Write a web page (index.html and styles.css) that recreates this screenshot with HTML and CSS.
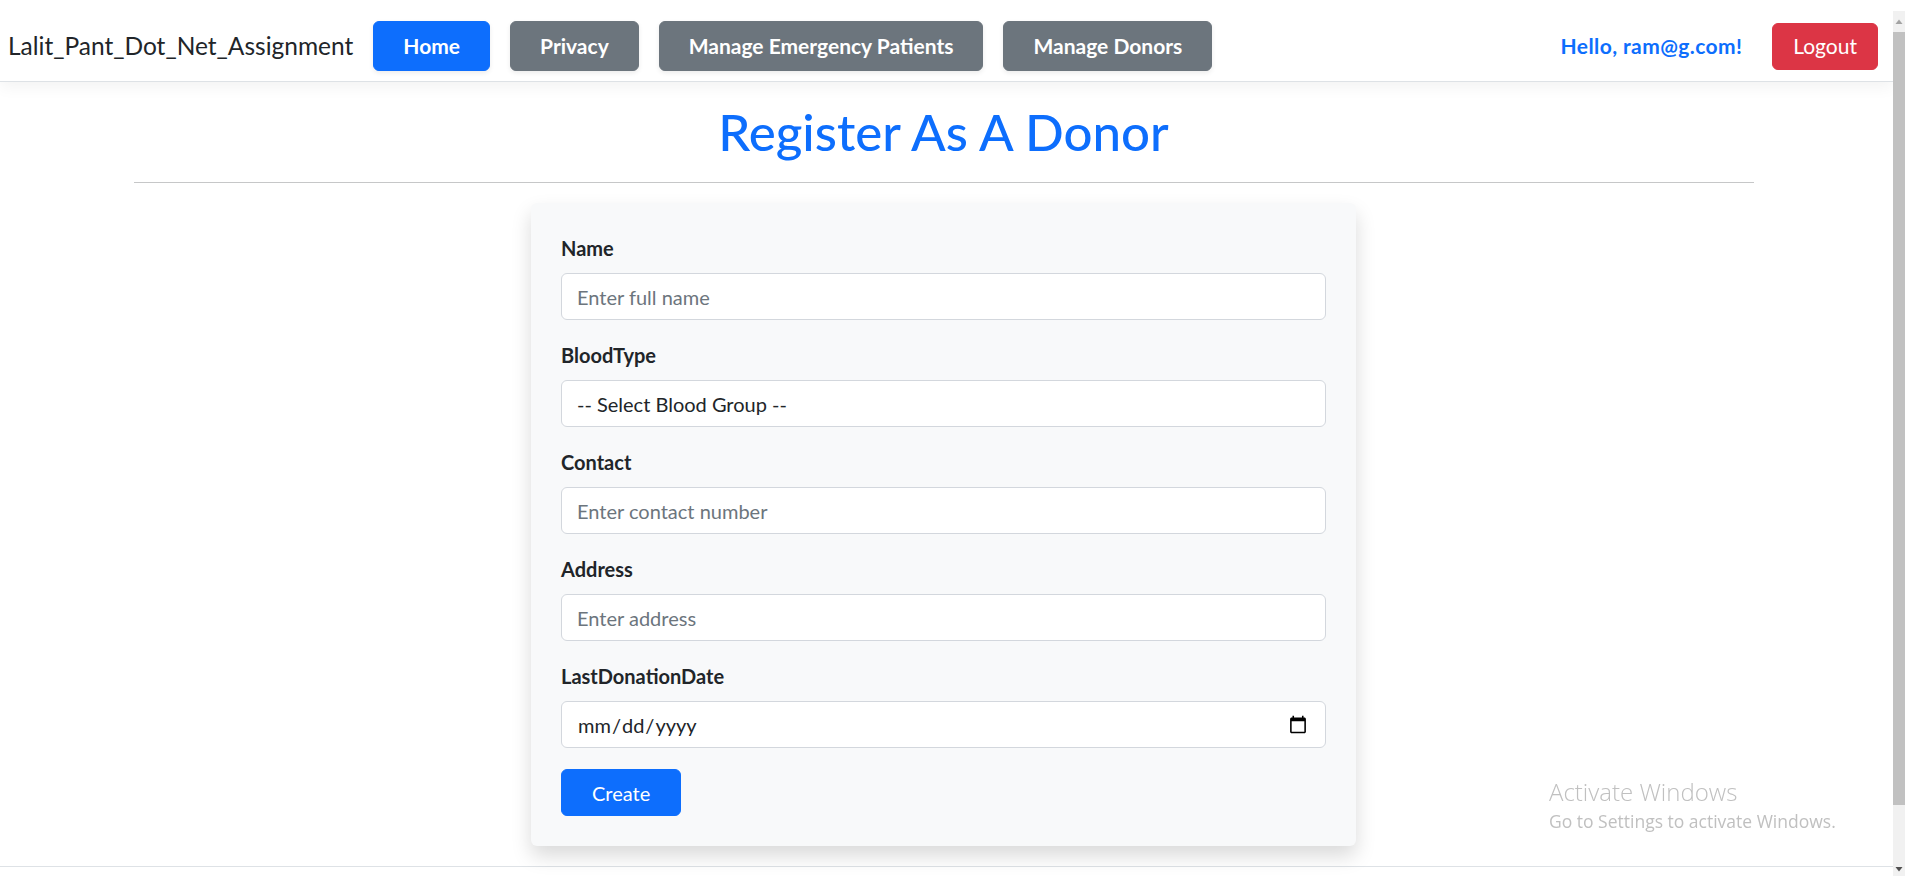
FILE: index.html
```html
<!DOCTYPE html>
<html lang="en">
<head>
<meta charset="utf-8">
<title>Register As A Donor - Lalit_Pant_Dot_Net_Assignment</title>
<link rel="stylesheet" href="styles.css">
</head>
<body>
<div class="page">
  <header>
    <nav class="navbar">
      <a class="brand" href="#">Lalit_Pant_Dot_Net_Assignment</a>
      <ul class="nav-links">
        <li><a class="btn-nav btn-primary" href="#">Home</a></li>
        <li><a class="btn-nav btn-secondary" href="#">Privacy</a></li>
        <li><a class="btn-nav btn-secondary" href="#">Manage Emergency Patients</a></li>
        <li><a class="btn-nav btn-secondary" href="#">Manage Donors</a></li>
      </ul>
      <div class="nav-user">
        <a class="hello" href="#">Hello, ram@g.com!</a>
        <button class="btn-logout" type="button">Logout</button>
      </div>
    </nav>
  </header>

  <main class="container">
    <h1 class="page-title">Register As A Donor</h1>
    <hr class="divider">
    <div class="row">
      <form class="card">
        <div class="field">
          <label class="field-label" for="name">Name</label>
          <input class="form-control" id="name" type="text" placeholder="Enter full name">
        </div>
        <div class="field">
          <label class="field-label" for="blood">BloodType</label>
          <select class="form-control form-select" id="blood">
            <option>-- Select Blood Group --</option>
            <option>A+</option>
            <option>A-</option>
            <option>B+</option>
            <option>B-</option>
            <option>AB+</option>
            <option>AB-</option>
            <option>O+</option>
            <option>O-</option>
          </select>
        </div>
        <div class="field">
          <label class="field-label" for="contact">Contact</label>
          <input class="form-control" id="contact" type="text" placeholder="Enter contact number">
        </div>
        <div class="field">
          <label class="field-label" for="address">Address</label>
          <input class="form-control" id="address" type="text" placeholder="Enter address">
        </div>
        <div class="field">
          <label class="field-label" for="ldd">LastDonationDate</label>
          <input class="form-control" id="ldd" type="date">
        </div>
        <button class="btn-create" type="submit">Create</button>
      </form>
    </div>
  </main>

  <footer class="footer"></footer>
</div>

<div class="scrollbar" aria-hidden="true">
  <div class="sb-gap"></div>
  <div class="sb-btn sb-up">
    <svg width="12" height="21" viewBox="0 0 12 21"><path d="M2.5 13 L6 8.5 L9.5 13 Z" fill="#a3a3a3"/></svg>
  </div>
  <div class="sb-thumb"></div>
  <div class="sb-rest"></div>
  <div class="sb-btn sb-down">
    <svg width="12" height="14" viewBox="0 0 12 14"><path d="M2.5 5 L6 9.5 L9.5 5 Z" fill="#505050"/></svg>
  </div>
</div>

<div class="watermark">
  <div class="wm-title">Activate Windows</div>
  <div class="wm-sub">Go to Settings to activate Windows.</div>
</div>
</body>
</html>
```

FILE: styles.css
```css
html {
  font-size: 20px;
}

body {
  margin: 0;
  display: flex;
  height: 100vh;
  overflow: hidden;
  font-family: "Lato", "Noto Sans", sans-serif;
  font-size: 20px;
  line-height: 1.5;
  color: #212529;
  background: #fff;
}

a {
  text-decoration: none;
}

/* Page (scroll area) */
.page {
  flex: 1;
  min-width: 0;
  height: 100vh;
  overflow: hidden;
}

/* Scrollbar column */
.scrollbar {
  flex: none;
  width: 12px;
  height: 100vh;
  display: flex;
  flex-direction: column;
  background: #f1f1f1;
}

.sb-gap {
  height: 11px;
  background: #fff;
}

.sb-btn {
  display: flex;
  justify-content: center;
}

.sb-up {
  height: 21px;
}

.sb-down {
  height: 14px;
}

.sb-thumb {
  height: 773px;
  background: #c1c1c1;
}

.sb-rest {
  flex: 1;
}

/* Navbar */
.navbar {
  display: flex;
  align-items: center;
  padding: 21px 15px 10px 8px;
  background: #fff;
  border-bottom: 1px solid #dee2e6;
  box-shadow: 0 5px 15px rgba(0, 0, 0, 0.05);
}

.brand {
  font-size: 24.5px;
  line-height: 1.5;
  color: #212529;
  margin-right: 20px;
}

.nav-links {
  display: flex;
  gap: 20px;
  list-style: none;
  margin: 0;
  padding: 0;
  flex: 1;
}

.btn-nav {
  display: block;
  padding: 9px 29px;
  border: 1px solid transparent;
  border-radius: 6px;
  font-weight: 700;
  font-size: 21px;
  line-height: 30px;
  color: #fff;
  box-shadow: 0 2px 5px rgba(0, 0, 0, 0.08);
}

.btn-primary {
  background: #0d6efd;
  border-color: #0d6efd;
}

.btn-secondary {
  background: #6c757d;
  border-color: #6c757d;
}

.nav-user {
  display: flex;
  align-items: center;
  gap: 30px;
}

.hello {
  font-weight: 700;
  color: #0d6efd;
  font-size: 21px;
  letter-spacing: 0.4px;
}

.btn-logout {
  font-family: inherit;
  font-size: 21px;
  line-height: 30px;
  padding: 7.5px 20px;
  border: 1px solid #dc3545;
  background: #dc3545;
  color: #fff;
  border-radius: 6px;
  cursor: pointer;
}

/* Main */
.container {
  max-width: 1620px;
  margin: 0 auto;
  padding: 0 18px 0 12px;
}

.page-title {
  margin: 20px 0 0;
  font-size: 51px;
  font-weight: 500;
  line-height: 60px;
  color: #0d6efd;
  text-align: center;
}

.divider {
  margin: 20px 0;
  border: 0;
  border-top: 1px solid #c6c7c8;
}

.row {
  display: flex;
  justify-content: center;
}

.card {
  width: 825px;
  box-sizing: border-box;
  padding: 30px;
  background: #f8f9fa;
  border-radius: 6px;
  box-shadow: 0 10px 20px rgba(0, 0, 0, 0.15);
  margin-bottom: 20px;
}

.field {
  margin-bottom: 20px;
}

.field-label {
  display: block;
  font-weight: 700;
  line-height: 30px;
  margin-bottom: 10px;
}

.form-control {
  display: block;
  width: 100%;
  box-sizing: border-box;
  height: 47px;
  padding: 7.5px 15px;
  font-family: inherit;
  font-size: 20px;
  line-height: 30px;
  color: #212529;
  background: #fff;
  border: 1px solid #d3d7dd;
  border-radius: 6px;
  margin: 0;
}

.form-control::placeholder {
  color: #6c757d;
}

.form-select {
  appearance: none;
  -webkit-appearance: none;
}

.btn-create {
  font-family: inherit;
  font-size: 20px;
  line-height: 30px;
  padding: 7.5px 30px;
  margin-top: 1px;
  border: 1px solid #0d6efd;
  background: #0d6efd;
  color: #fff;
  border-radius: 6px;
  cursor: pointer;
}

/* Footer */
.footer {
  border-top: 1px solid #dee2e6;
  height: 90px;
}

/* Windows watermark overlay */
.watermark {
  position: fixed;
  left: 1549px;
  top: 775px;
  color: #c0c0c0;
  font-family: "Open Sans", "Lato", sans-serif;
  pointer-events: none;
}

.wm-title {
  font-size: 24px;
  font-weight: 300;
  line-height: 33px;
}

.wm-sub {
  font-size: 17.5px;
  font-weight: 400;
  line-height: 26px;
}
```
